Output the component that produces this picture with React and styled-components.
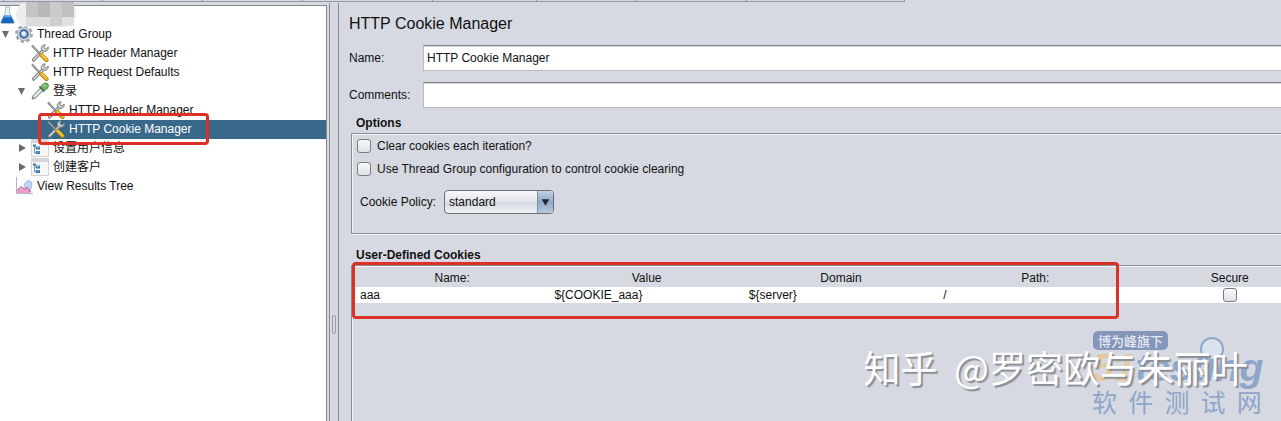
import React, { useState } from "react";
import styled, { createGlobalStyle } from "styled-components";

const TREE = [
  { id: "plan", label: "", icon: "flask", depth: 0 },
  { id: "group", label: "Thread Group", icon: "gear", depth: 0, arrow: "open" },
  { id: "header", label: "HTTP Header Manager", icon: "tools", depth: 1 },
  { id: "defaults", label: "HTTP Request Defaults", icon: "tools", depth: 1 },
  { id: "login", label: "登录", icon: "dropper", depth: 1, arrow: "open" },
  { id: "loginHeader", label: "HTTP Header Manager", icon: "tools", depth: 2 },
  { id: "loginCookie", label: "HTTP Cookie Manager", icon: "tools", depth: 2 },
  { id: "user", label: "设置用户信息", icon: "controller", depth: 1, arrow: "closed" },
  { id: "client", label: "创建客户", icon: "controller", depth: 1, arrow: "closed" },
  { id: "results", label: "View Results Tree", icon: "chart", depth: 0 },
];

const TABS = [4, 99, 100, 100, 130, 104, 100, 110, 158];

function FlaskIcon() {
  return (
    <Icon viewBox="0 0 18 18">
      <path d="M5 1h5M5.500 1v6L.8 16q-.4 1.500 1 1.500h11.400q1.400 0 1-1.500L9.500 7V1" fill="#e9f2fa" stroke="#b3bfca" />
      <path d="M4.200 9.500h6.600l3.200 6.500q.4 1-1 1H2q-1.400 0-1-1z" fill="#1667c0" />
      <path d="M4.500 10h6l.6 1.500H3.700z" fill="#5fa4e6" />
    </Icon>
  );
}

function GearIcon() {
  return (
    <Icon viewBox="0 0 18 18">
      <circle cx="9" cy="9" r="7.400" fill="none" stroke="#a3a8b1" strokeWidth="3" strokeDasharray="3.300 2.510" />
      <circle cx="9" cy="9" r="6.500" fill="#d9dde4" stroke="#a3a9b4" />
      <circle cx="9" cy="9" r="3.800" fill="#a9c4e8" stroke="#3a5f98" strokeWidth="1.800" />
      <circle cx="8.500" cy="8.500" r="2" fill="#e9f2fd" />
    </Icon>
  );
}

function ToolsIcon() {
  return (
    <Icon viewBox="0 0 18 18">
      <path d="M2.500 16L12.500 6" stroke="#75787a" strokeWidth="3.200" strokeLinecap="round" />
      <path d="M2.500 16L12.500 6" stroke="#d9dbdb" strokeWidth="1.600" strokeLinecap="round" />
      <path d="M14.300.8a3.700 3.700 0 0 0-3.900 4.900q1.800 2.500 4.700 1.400a3.600 3.600 0 0 0 2.200-4l-2.500 1.900-1.900-1.600z" fill="#ced1d2" stroke="#75797b" strokeWidth=".9" />
      <path d="M1 1.500L10 11" stroke="#6f7375" strokeWidth="2" />
      <path d="M1 1.500L9 9.800" stroke="#dddfdf" strokeWidth=".7" />
      <path d="M10.500 11l5 5" stroke="#a77908" strokeWidth="4" strokeLinecap="round" />
      <path d="M10.500 10.800l5 5" stroke="#efb91f" strokeWidth="2.800" strokeLinecap="round" />
      <path d="M11.200 10.800l4.500 4.200" stroke="#fae17e" strokeWidth=".8" />
    </Icon>
  );
}

function DropperIcon() {
  return (
    <Icon viewBox="0 0 18 18">
      <path d="M1 17l1.200-3.500L9.500 6l2.500 2.500L4.500 16z" fill="#cdd5d8" stroke="#6c777c" />
      <path d="M3.500 14.500L10 8" stroke="#eff4f5" strokeWidth="1.200" />
      <path d="M8.500 4.500l5 5" stroke="#4c7046" strokeWidth="1.800" />
      <path d="M10.200 5.200q1-3.900 4.300-4.400 3.300.3 3 3.300-.5 3.200-4.300 4.300z" fill="#73b463" stroke="#4b8c46" strokeWidth=".8" />
      <path d="M12.500 4.500l2-1.800" stroke="#b6df9f" strokeWidth="1.400" />
    </Icon>
  );
}

function ControllerIcon() {
  return (
    <Icon viewBox="0 0 18 18">
      <path d="M.5.500h17v17H.5z" fill="#f6f7f9" stroke="#d1d4d9" />
      <path d="M1 1h16v3H1z" fill="#d6d8dc" />
      <path d="M3.500 6v8.500M3.500 9H6M3.500 13.500H6" stroke="#789bbd" fill="none" />
      <path d="M2 5.500h3v2H2zM5 7.500h4v3H5zM5 12h4v3H5z" fill="#3278b5" />
      <path d="M6 8.500h2M6 13h2" stroke="#9cc7ea" />
    </Icon>
  );
}

function ChartIcon() {
  return (
    <Icon viewBox="0 0 18 18">
      <path d="M1.500 0v16.500H18" stroke="#b4b4c3" fill="none" />
      <path d="M9 9q.5-5 5-5.500 3.500.5 3 5L15 15q-5-1-6-6" fill="#bcd2f6" stroke="#86a4db" strokeWidth=".6" />
      <path d="M2 16v-2.500l4-4 3.500 2.500 3-1.500 3 4.500v1z" fill="#eba0ca" />
      <path d="M2 13.500l4-4 3.500 2.500 3-1.500 3 4.500" stroke="#c2569a" fill="none" />
    </Icon>
  );
}

const icons = {
  flask: FlaskIcon,
  gear: GearIcon,
  tools: ToolsIcon,
  dropper: DropperIcon,
  controller: ControllerIcon,
  chart: ChartIcon,
};

function TreeItem({ item, selected, onSelect }) {
  const ItemIcon = icons[item.icon];

  return (
    <li>
      <TreeRow
        type="button"
        aria-label={item.label || "Test Plan"}
        $depth={item.depth}
        $selected={selected}
        onClick={() => onSelect(item.id)}
      >
        {item.icon !== "flask" && (
          <ArrowSlot>
            {item.arrow && (
              <svg width="8" height="8" viewBox="0 0 8 8">
                <path d={item.arrow === "open" ? "M0 1h7L3.500 8z" : "M1 0l7 4-7 4z"} fill="#6b6b6b" />
              </svg>
            )}
          </ArrowSlot>
        )}
        <ItemIcon />
        {item.label}
      </TreeRow>
    </li>
  );
}

function App() {
  const [selected, setSelected] = useState("loginCookie");
  const [name, setName] = useState("HTTP Cookie Manager");
  const [comments, setComments] = useState("");

  return (
    <Page>
      <GlobalStyle />
      <TabStrip>
        {TABS.map((width, index) => (
          <TabEdge key={index} $width={width} />
        ))}
      </TabStrip>
      <Main>
        <Sidebar>
          <Tree>
            {TREE.map((item) => (
              <TreeItem
                key={item.id}
                item={item}
                selected={item.id === selected}
                onSelect={setSelected}
              />
            ))}
          </Tree>
          <Mosaic viewBox="0 0 60 27">
            <rect y="2" width="60" height="25" rx="12" fill="#ededee" />
            <path d="M10 2h48v15H10z" fill="#c5c5c7" />
            <path d="M22 2h12v15H22z" fill="#b8b8bb" />
            <path d="M34 2h12v15H34z" fill="#cbcbcc" />
            <path d="M46 2h12v15H46z" fill="#c0c0c2" />
            <path d="M10 17h24v9H10z" fill="#dcdcdd" />
            <path d="M34 17h12v9H34z" fill="#cececf" />
            <path d="M46 17h12v9H46z" fill="#e1e1e2" />
          </Mosaic>
          <TreeMark />
        </Sidebar>
        <Splitter>
          <Grip />
        </Splitter>
        <Panel>
          <Title>HTTP Cookie Manager</Title>
          <Fields>
            <Field>
              <FieldLabel htmlFor="name">Name:</FieldLabel>
              <TextInput id="name" value={name} onChange={(e) => setName(e.target.value)} />
            </Field>
            <Field>
              <FieldLabel htmlFor="comments">Comments:</FieldLabel>
              <TextInput id="comments" value={comments} onChange={(e) => setComments(e.target.value)} />
            </Field>
          </Fields>

          <Heading>Options</Heading>
          <Options>
            <CheckLabel>
              <Checkbox type="checkbox" />
              Clear cookies each iteration?
            </CheckLabel>
            <CheckLabel>
              <Checkbox type="checkbox" />
              Use Thread Group configuration to control cookie clearing
            </CheckLabel>
            <Policy>
              <label htmlFor="policy">Cookie Policy:</label>
              <SelectBox>
                <Select id="policy" defaultValue="standard">
                  <option value="standard">standard</option>
                  <option value="netscape">netscape</option>
                </Select>
                <SelectArrow viewBox="0 0 16 22">
                  <path d="M4 8h8l-4 7z" fill="#1f2733" />
                </SelectArrow>
              </SelectBox>
            </Policy>
          </Options>

          <Heading>User-Defined Cookies</Heading>
          <CookieArea>
            <TableClip>
              <Table>
                <thead>
                  <tr>
                    <Th>Name:</Th>
                    <Th>Value</Th>
                    <Th>Domain</Th>
                    <Th>Path:</Th>
                    <Th>Secure</Th>
                  </tr>
                </thead>
                <tbody>
                  <tr>
                    <Td>aaa</Td>
                    <Td>{"${COOKIE_aaa}"}</Td>
                    <Td>{"${server}"}</Td>
                    <Td>/</Td>
                    <Td $center>
                      <Checkbox type="checkbox" aria-label="Secure" />
                    </Td>
                  </tr>
                </tbody>
              </Table>
            </TableClip>
            <TableMark />
          </CookieArea>
        </Panel>
      </Main>
      <SiteLogo>
        <SiteBadge>博为峰旗下</SiteBadge>
        <SiteName>
          <span>51</span>testing
          <Ring viewBox="0 0 30 30">
            <circle cx="13" cy="13" r="11" fill="#d9e2ef" stroke="#90a7ca" strokeWidth="2" />
          </Ring>
        </SiteName>
        <SiteCaption>{"软  件  测  试  网"}</SiteCaption>
      </SiteLogo>
      <Watermark>{"知乎  @罗密欧与朱丽叶"}</Watermark>
    </Page>
  );
}

export default App;

const GlobalStyle = createGlobalStyle`
  * {
    box-sizing: border-box;
  }

  body {
    margin: 0;
    background: #d6d9e1;
    color: #111;
    font: 12px/16px "Liberation Sans", "Noto Sans CJK SC", sans-serif;
  }

  button, input, select {
    font: inherit;
    color: inherit;
  }
`;

const Page = styled.div`
  position: relative;
  display: flex;
  flex-direction: column;
  min-height: 100vh;
  overflow: hidden;
`;

const TabStrip = styled.div`
  display: flex;
  align-self: flex-start;
  height: 2px;
  border-bottom: 1px solid #9297a1;
`;

const TabEdge = styled.span`
  width: ${({ $width }) => $width}px;
  border-right: 1px solid #8f959f;
`;

const Main = styled.div`
  display: grid;
  grid-template-columns: 327px 12px minmax(0, 1fr);
  flex: 1;
`;

const Sidebar = styled.div`
  position: relative;
  margin-top: 3px;
  border-top: 1px solid #85878d;
  border-right: 1px solid #85878d;
  background: #fff;
`;

const Tree = styled.ul`
  margin: 0;
  padding: 0;
  list-style: none;
`;

const TreeRow = styled.button`
  display: flex;
  align-items: center;
  width: 100%;
  height: 19px;
  padding: 0 0 2px ${({ $depth }) => $depth * 16}px;
  border: 0;
  background: ${({ $selected }) => ($selected ? "#39698a" : "transparent")};
  color: ${({ $selected }) => ($selected ? "#fff" : "#111")};
  white-space: nowrap;
`;

const ArrowSlot = styled.span`
  display: flex;
  flex: none;
  width: 15px;
  padding-left: 2px;
`;

const Icon = styled.svg`
  flex: none;
  width: 18px;
  height: 18px;
  margin-right: 4px;
`;

const Mosaic = styled.svg`
  position: absolute;
  top: -6px;
  left: 16px;
  width: 60px;
  height: 27px;
`;

const Mark = styled.div`
  position: absolute;
  border: 3px solid #dc2f26;
  border-radius: 4px;
  pointer-events: none;
`;

const TreeMark = styled(Mark)`
  top: 107px;
  left: 38px;
  width: 171px;
  height: 32px;
`;

const TableMark = styled(Mark)`
  top: -4px;
  left: 0;
  width: 767px;
  height: 57px;
`;

const Splitter = styled.div`
  display: flex;
  align-items: center;
  justify-content: center;
  margin: 1px 0 0 2px;
  padding-top: 225px;
  border-left: 1px solid #8b8e96;
  border-right: 1px solid #8b8e96;
`;

const Grip = styled.span`
  width: 4px;
  height: 19px;
  border: 1px solid #9a9ea8;
  border-radius: 2px;
`;

const Panel = styled.main`
  display: flex;
  flex-direction: column;
  min-width: 0;
  padding: 12px 0 0 10px;
`;

const Title = styled.h1`
  margin: 0 0 11px;
  font-size: 16px;
  font-weight: 400;
  line-height: 20px;
`;

const Fields = styled.div`
  display: flex;
  flex-direction: column;
  gap: 11px;
  margin-bottom: 7px;
`;

const Field = styled.div`
  display: flex;
  align-items: center;
`;

const FieldLabel = styled.label`
  flex: none;
  width: 74px;
`;

const TextInput = styled.input`
  flex: 1;
  min-width: 0;
  height: 26px;
  padding: 0 3px;
  border: 1px solid #b9bbc3;
  border-top-color: #84868c;
  border-right: 0;
  border-radius: 0;
  background: #fff;
  box-shadow: inset 0 1px #d3d4d8;
  outline: none;
`;

const Heading = styled.h2`
  margin: 0;
  padding: 0 0 2px 7px;
  font-size: 12px;
  line-height: 16px;
`;

const Options = styled.section`
  display: flex;
  flex-direction: column;
  align-items: flex-start;
  margin: 0 0 13px 2px;
  padding: 4px 0 19px 4px;
  border: 1px solid #8b8e95;
  border-right: 0;
  box-shadow: inset 1px 1px #f4f5f8, 0 1px #f4f5f8;
`;

const CheckLabel = styled.label`
  display: flex;
  align-items: center;
  gap: 6px;
  height: 16px;
  margin-bottom: 7px;
`;

const Checkbox = styled.input`
  appearance: none;
  width: 14px;
  height: 14px;
  margin: 0 0 0 1px;
  border: 1px solid #777b84;
  border-radius: 3px;
  background: linear-gradient(#f7f8fa, #dfe2e8);

  &:checked {
    background: #39698a;
  }
`;

const Policy = styled.div`
  display: flex;
  align-items: center;
  gap: 8px;
  padding: 6px 0 0 4px;
`;

const SelectBox = styled.div`
  position: relative;
`;

const Select = styled.select`
  appearance: none;
  display: block;
  width: 110px;
  height: 24px;
  padding: 0 20px 0 4px;
  border: 1px solid #6b7078;
  border-radius: 4px;
  background: linear-gradient(#f8f9fb, #e0e3e9 50%, #d6d9e0 50%, #eff1f5);
`;

const SelectArrow = styled.svg`
  position: absolute;
  top: 1px;
  right: 1px;
  width: 16px;
  height: 22px;
  border-left: 1px solid #7d91a9;
  border-radius: 0 3px 3px 0;
  background: linear-gradient(#c3d2e3, #8ea9c6 50%, #b7cadd);
  pointer-events: none;
`;

const CookieArea = styled.section`
  position: relative;
  flex: 1;
  margin-left: 2px;
  padding: 2px 0 0 3px;
  border-top: 1px solid #8b8e95;
  border-left: 1px solid #8b8e95;
  box-shadow: inset 1px 1px #f4f5f8;
`;

const TableClip = styled.div`
  overflow: hidden;
`;

const Table = styled.table`
  width: calc(100% + 46px);
  border-collapse: collapse;
  table-layout: fixed;
`;

const Th = styled.th`
  height: 19px;
  padding: 0;
  font-weight: 400;
  text-align: center;
`;

const Td = styled.td`
  height: 16px;
  padding: 0 5px;
  background: #fff;
  line-height: 16px;
  text-align: ${({ $center }) => ($center ? "center" : "left")};

  ${Checkbox} {
    display: block;
    margin: 0 auto;
  }
`;

const SiteLogo = styled.div`
  position: absolute;
  right: 17px;
  bottom: 5px;
  display: flex;
  flex-direction: column;
  align-items: flex-start;
  width: 172px;
  color: #8fa6ca;
  font-family: "Noto Sans CJK SC", sans-serif;
`;

const SiteBadge = styled.span`
  margin-left: 1px;
  padding: 0 5px;
  border-radius: 5px;
  background: #8496b9;
  color: #e4e9f2;
  font-size: 13px;
  font-weight: 500;
  line-height: 19px;
`;

const SiteName = styled.strong`
  position: relative;
  font: italic bold 39px/36px "Liberation Sans", sans-serif;

  span {
    color: #e3c99f;
  }
`;

const Ring = styled.svg`
  position: absolute;
  top: -14px;
  left: 107px;
  width: 30px;
  height: 30px;
`;

const SiteCaption = styled.span`
  font-size: 25px;
  line-height: 30px;
  white-space: pre;
`;

const Watermark = styled.div`
  position: absolute;
  right: 33px;
  bottom: 32px;
  color: #fff;
  font: 400 37px/44px "Noto Sans CJK SC", sans-serif;
  text-shadow: 2px 2px 1px #898d95;
  white-space: pre;
`;
